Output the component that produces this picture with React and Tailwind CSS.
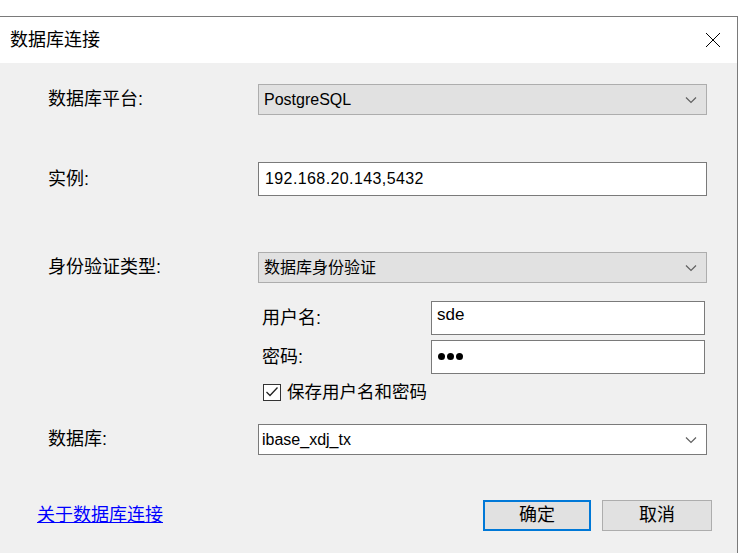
import React from "react";

const font = { fontFamily: '"Liberation Sans", "Noto Sans CJK SC", sans-serif' };

const Chevron = () => (
  <svg width="12" height="8" viewBox="0 0 12 8" className="shrink-0">
    <path d="M1 1.5 L6 6.5 L11 1.5" fill="none" stroke="#606060" strokeWidth="1.2" />
  </svg>
);

const Select = ({ value, white }) => (
  <div
    className={`flex items-center justify-between h-[31px] w-[449px] pr-[9px] border ${
      white ? "bg-white border-[#7a7a7a] pl-[3px]" : "bg-[#e1e1e1] border-[#adadad] pl-[5px]"
    } text-[16px] text-black`}
  >
    <span>{value}</span>
    <Chevron />
  </div>
);

const Label = ({ children }) => (
  <div className="w-[258px] pl-[48px] text-[18px] text-black">{children}</div>
);

export default function App() {
  return (
    <div className="w-[743px] h-[560px] bg-white pt-[16px]" style={font}>
      <div className="w-[738px] h-[537px] border-t border-r border-[#7a7a7a] bg-[#f0f0f0] flex flex-col">
        <div className="h-[46px] bg-white flex items-center justify-between pl-[10px] pr-[16px]">
          <span className="text-[18px] text-black">数据库连接</span>
          <svg width="16" height="16" viewBox="0 0 16 16">
            <path d="M1 1 L15 15 M15 1 L1 15" stroke="#000" strokeWidth="1" fill="none" />
          </svg>
        </div>

        <div className="flex flex-col pt-[21px]">
          <div className="flex items-center">
            <Label>数据库平台:</Label>
            <Select value="PostgreSQL" />
          </div>

          <div className="flex items-center mt-[47px]">
            <Label>实例:</Label>
            <div className="h-[34px] w-[449px] bg-white border border-[#7a7a7a] flex items-center pl-[6px] text-[16px] tracking-[0.4px]">
              192.168.20.143,5432
            </div>
          </div>

          <div className="flex items-center mt-[56px]">
            <Label>身份验证类型:</Label>
            <Select value="数据库身份验证" />
          </div>

          <div className="flex mt-[18px]">
            <div className="w-[258px]" />
            <div className="w-[449px] flex flex-col">
              <div className="flex items-center">
                <span className="w-[173px] pl-[4px] text-[18px]">用户名:</span>
                <div className="h-[34px] w-[274px] bg-white border border-[#7a7a7a] flex items-center pl-[5px] pb-[6px] text-[17px]">
                  sde
                </div>
              </div>
              <div className="flex items-center mt-[5px]">
                <span className="w-[173px] pl-[4px] text-[18px]">密码:</span>
                <div className="h-[34px] w-[274px] bg-white border border-[#7a7a7a] flex items-center gap-[2px] pl-[6px] pb-[2px]">
                  <span className="w-[7px] h-[7px] rounded-full bg-black" />
                  <span className="w-[7px] h-[7px] rounded-full bg-black" />
                  <span className="w-[7px] h-[7px] rounded-full bg-black" />
                </div>
              </div>
              <div className="flex items-center mt-[5px] pl-[5px] gap-[6px]">
                <div className="w-[18px] h-[17px] border border-[#333] bg-white flex items-center justify-center">
                  <svg width="14" height="12" viewBox="0 0 14 12">
                    <path d="M1.5 6 L5 9.5 L12.5 1.5" fill="none" stroke="#222" strokeWidth="1.3" />
                  </svg>
                </div>
                <span className="text-[17.5px]">保存用户名和密码</span>
              </div>
            </div>
          </div>

          <div className="flex items-center mt-[19px]">
            <Label>数据库:</Label>
            <Select value="ibase_xdj_tx" white />
          </div>

          <div className="flex items-center mt-[45px]">
            <div className="w-[446px] pl-[37px]">
              <a href="#" className="text-[18px] text-[#0000ff] underline">
                关于数据库连接
              </a>
            </div>
            <button className="w-[108px] h-[31px] bg-[#e1e1e1] border-2 border-[#0078d7] text-[18px] text-black ml-[37px]">
              确定
            </button>
            <button className="w-[110px] h-[31px] bg-[#e1e1e1] border border-[#adadad] text-[18px] text-black ml-[11px]">
              取消
            </button>
          </div>
        </div>
      </div>
    </div>
  );
}
